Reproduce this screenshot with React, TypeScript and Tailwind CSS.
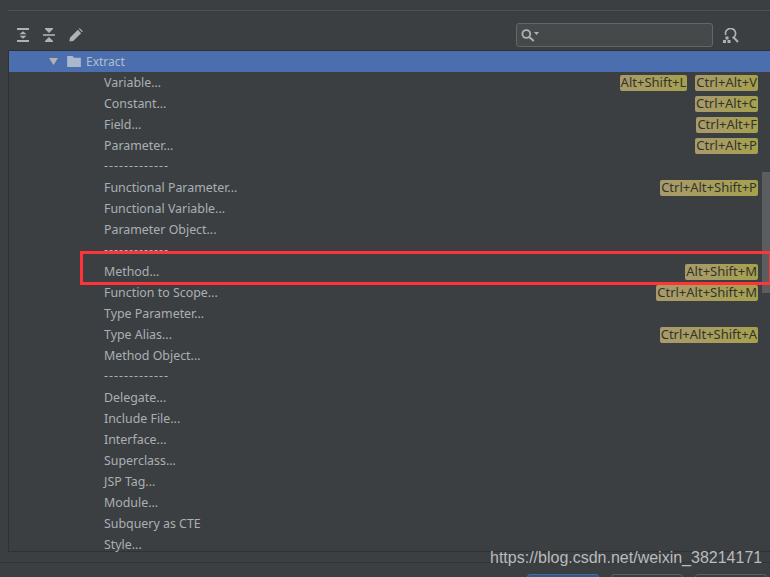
import React from "react";

type Row = { label: string; keys?: string[] };

const rows: Row[] = [
  { label: "Variable...", keys: ["Alt+Shift+L", "Ctrl+Alt+V"] },
  { label: "Constant...", keys: ["Ctrl+Alt+C"] },
  { label: "Field...", keys: ["Ctrl+Alt+F"] },
  { label: "Parameter...", keys: ["Ctrl+Alt+P"] },
  { label: "-------------" },
  { label: "Functional Parameter...", keys: ["Ctrl+Alt+Shift+P"] },
  { label: "Functional Variable..." },
  { label: "Parameter Object..." },
  { label: "-------------" },
  { label: "Method...", keys: ["Alt+Shift+M"] },
  { label: "Function to Scope...", keys: ["Ctrl+Alt+Shift+M"] },
  { label: "Type Parameter..." },
  { label: "Type Alias...", keys: ["Ctrl+Alt+Shift+A"] },
  { label: "Method Object..." },
  { label: "-------------" },
  { label: "Delegate..." },
  { label: "Include File..." },
  { label: "Interface..." },
  { label: "Superclass..." },
  { label: "JSP Tag..." },
  { label: "Module..." },
  { label: "Subquery as CTE" },
  { label: "Style..." },
];

const ExpandIcon = () => (
  <svg width="14" height="14" viewBox="0 0 14 14" fill="#afb1b3">
    <rect x="1" y="0" width="12" height="2" />
    <rect x="1" y="12" width="12" height="2" />
    <path d="M7 3.2 L10.5 6.2 H3.5 Z M7 10.8 L10.5 7.8 H3.5 Z" />
  </svg>
);

const CollapseIcon = () => (
  <svg width="14" height="14" viewBox="0 0 14 14" fill="#afb1b3">
    <path d="M3 0 H11 V1 L7 5 L3 1 Z" />
    <rect x="1" y="6.2" width="12" height="1.6" />
    <path d="M3 14 H11 V13 L7 9 L3 13 Z" />
  </svg>
);

const PencilIcon = () => (
  <svg width="14" height="14" viewBox="0 0 15 15" fill="#afb1b3">
    <path d="M0.5 14.5 L1 10.5 L9.5 2 L13 5.5 L4.5 14 Z" />
    <path d="M10.5 1 L11.5 0.3 L14.7 3.5 L14 4.5 Z" />
  </svg>
);

const SearchIcon = () => (
  <svg width="19" height="14" viewBox="0 0 19 14" fill="none">
    <circle cx="5.3" cy="6" r="3.9" stroke="#afb1b3" strokeWidth="1.8" />
    <path d="M8.2 9 L12.8 13" stroke="#afb1b3" strokeWidth="2" />
    <path d="M13 4 H18 L15.5 7 Z" fill="#afb1b3" />
  </svg>
);

const FindUsagesIcon = () => (
  <svg width="16" height="15" viewBox="0 0 16 15" fill="none">
    <path d="M2.8 7 A5 5 0 1 1 9.5 10" stroke="#afb1b3" strokeWidth="1.7" />
    <path d="M10.5 9.2 L15 14" stroke="#afb1b3" strokeWidth="2" />
    <rect x="2.5" y="8.5" width="3" height="3" fill="#afb1b3" />
    <rect x="0" y="12" width="3" height="3" fill="#afb1b3" />
    <rect x="4.5" y="12" width="3" height="3" fill="#afb1b3" />
  </svg>
);

const Key = ({ text }: { text: string }) => (
  <span className="h-[16px] rounded-[2px] bg-[linear-gradient(90deg,#a99a6b,#a5a14e)] px-[1px] text-[13px] leading-[14px] text-[#33342e]">
    {text}
  </span>
);

export default function App() {
  return (
    <div
      className="relative flex h-[577px] w-[770px] flex-col overflow-hidden bg-[#3c3f41] text-[12.4px] text-[#a9b0b5]"
      style={{ fontFamily: '"Noto Sans", "Open Sans", sans-serif' }}
    >
      <div className="ml-2 mt-[10px] h-px shrink-0 bg-[#4e5254]" />

      <div className="flex h-[39px] shrink-0 items-center pl-[16px] pr-[31px] pt-[9px]">
        <ExpandIcon />
        <div className="ml-[12px]">
          <CollapseIcon />
        </div>
        <div className="ml-[13px]">
          <PencilIcon />
        </div>
        <div className="ml-auto flex h-[24px] w-[197px] items-center rounded-[3px] border border-[#64676a] bg-[#45494a] pl-[4px]">
          <SearchIcon />
        </div>
        <div className="ml-[10px]">
          <FindUsagesIcon />
        </div>
      </div>

      <div className="ml-2 h-[502px] shrink-0 border-y border-l border-[#2f3133]">
        <div className="flex h-[21px] items-center bg-[#4b6eaf] pl-[39px] text-[#b4bec9]">
          <svg width="11" height="9" viewBox="0 0 12 10" fill="#b3b4ae">
            <path d="M1 1 H11 L6 9 Z" />
          </svg>
          <svg className="ml-[8px]" width="14" height="11" viewBox="0 0 15 12" fill="#a9b8cf">
            <path d="M0 0 H6 L7.5 2 H15 V12 H0 Z" />
          </svg>
          <span className="ml-[5px] text-[12px]">Extract</span>
        </div>
        {rows.map((row, i) => (
          <div key={i} className="flex h-[21px] items-center justify-between pl-[95px] pr-[12px]">
            {row.label.startsWith("-") ? (
              <span className="whitespace-nowrap tracking-[1px]">{row.label}</span>
            ) : (
              <span className="whitespace-nowrap pt-[2px]">{row.label}</span>
            )}
            {row.keys && (
              <div className="flex gap-[8px]">
                {row.keys.map((k) => (
                  <Key key={k} text={k} />
                ))}
              </div>
            )}
          </div>
        ))}
      </div>

      <div className="mt-[10px] h-px shrink-0 bg-[#313335]" />
      <div className="mt-[11px] flex shrink-0 justify-end gap-[12px] pr-[3px]">
        <div className="h-[8px] w-[72px] rounded-t-[3px] border border-[#3f6d9e] bg-[#365880]" />
        <div className="h-[8px] w-[72px] rounded-t-[3px] border border-[#5e6060] bg-[#3c3f41]" />
        <div className="h-[8px] w-[72px] rounded-t-[3px] border border-[#5e6060] bg-[#3c3f41]" />
      </div>

      <div className="absolute right-0 top-[172px] h-[121px] w-[8px] bg-[#5b5d5f]" />
      <div className="absolute left-[80px] top-[251px] h-[34px] w-[690px] border-[3px] border-r-[1px] border-[#ff3338]" />
      <div
        className="absolute left-[490px] top-[548px] whitespace-nowrap text-[16px] leading-[20px] text-[#b9bbbc]"
        style={{ fontFamily: '"Liberation Sans", Arial, sans-serif' }}
      >
        https://blog.csdn.net/weixin_38214171
      </div>
    </div>
  );
}
